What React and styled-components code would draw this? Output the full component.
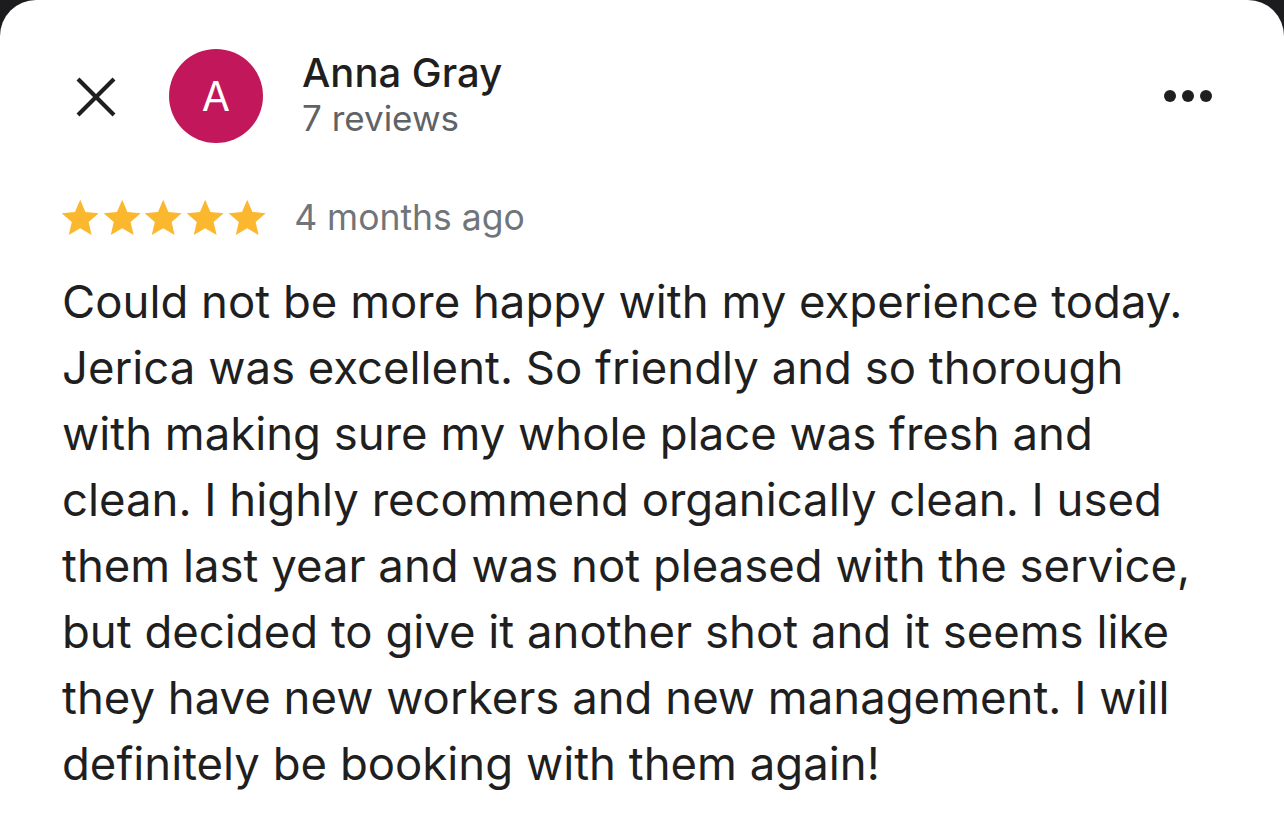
import styled, { createGlobalStyle } from "styled-components";

const Global = createGlobalStyle`
  html, body {
    margin: 0;
    padding: 0;
    background: #1c1c1e;
  }
  body {
    font-family: Inter, Roboto, "Noto Sans", Arial, sans-serif;
    -webkit-font-smoothing: antialiased;
  }
`;

const Sheet = styled.div`
  background: #ffffff;
  border-radius: 36px 36px 0 0;
  min-height: 840px;
  box-sizing: border-box;
  padding: 48px 0 0 0;
`;

const Header = styled.div`
  display: flex;
  align-items: center;
  height: 96px;
  padding: 0 72px 0 75px;
`;

const CloseButton = styled.button`
  width: 42px;
  height: 42px;
  padding: 0;
  border: 0;
  background: none;
  display: flex;
  align-items: center;
  justify-content: center;
  margin-top: 2px;
`;

const Avatar = styled.div`
  width: 94px;
  height: 94px;
  border-radius: 50%;
  background: #c2185b;
  color: #fff;
  display: flex;
  align-items: center;
  justify-content: center;
  font-size: 41px;
  margin-left: 52px;
`;

const Author = styled.div`
  display: flex;
  flex-direction: column;
  margin-left: 39px;
  flex: 1;
  margin-top: -2px;
`;

const Name = styled.div`
  font-size: 40px;
  font-weight: 500;
  color: #1f1f1f;
  line-height: 46px;
`;

const Reviews = styled.div`
  font-size: 35px;
  color: #5f6368;
  line-height: 44px;
`;

const Dots = styled.div`
  display: flex;
  gap: 6px;
  span {
    width: 12px;
    height: 12px;
    border-radius: 50%;
    background: #1f1f1f;
  }
`;

const Meta = styled.div`
  display: flex;
  align-items: center;
  padding: 0 0 0 62px;
  margin-top: 52px;
`;

const Stars = styled.div`
  display: flex;
  gap: 1.3px;
  margin-left: -2px;
`;

const Ago = styled.div`
  font-size: 35.5px;
  color: #70757a;
  margin-left: 27px;
`;

const Body = styled.p`
  margin: 30px 0 0 0;
  padding: 0 40px 0 62px;
  font-size: 45.5px;
  line-height: 66px;
  color: #1f1f1f;
  span {
    display: block;
    white-space: nowrap;
  }
`;

const Star = () => (
  <svg width="40.4" height="40.4" viewBox="0 0 24 24">
    <path
      fill="#fbb82e"
      d="M12 1.6l3.1 7.3 7.9.7-6 5.2 1.8 7.8L12 18.5l-6.8 4.1 1.8-7.8-6-5.2 7.9-.7z"
    />
  </svg>
);

const lines = [
  "Could not be more happy with my experience today.",
  "Jerica was excellent. So friendly and so thorough",
  "with making sure my whole place was fresh and",
  "clean. I highly recommend organically clean. I used",
  "them last year and was not pleased with the service,",
  "but decided to give it another shot and it seems like",
  "they have new workers and new management. I will",
  "definitely be booking with them again!",
];

export default function App() {
  return (
    <>
      <Global />
      <Sheet>
        <Header>
          <CloseButton aria-label="Close">
            <svg width="42" height="42" viewBox="0 0 42 42">
              <path
                d="M3 3L39 39M39 3L3 39"
                stroke="#1f1f1f"
                strokeWidth="4.2"
                strokeLinecap="butt"
              />
            </svg>
          </CloseButton>
          <Avatar>A</Avatar>
          <Author>
            <Name>Anna Gray</Name>
            <Reviews>7 reviews</Reviews>
          </Author>
          <Dots>
            <span />
            <span />
            <span />
          </Dots>
        </Header>
        <Meta>
          <Stars>
            {[0, 1, 2, 3, 4].map((i) => (
              <Star key={i} />
            ))}
          </Stars>
          <Ago>4 months ago</Ago>
        </Meta>
        <Body>
          {lines.map((l) => (
            <span key={l}>{l}</span>
          ))}
        </Body>
      </Sheet>
    </>
  );
}
